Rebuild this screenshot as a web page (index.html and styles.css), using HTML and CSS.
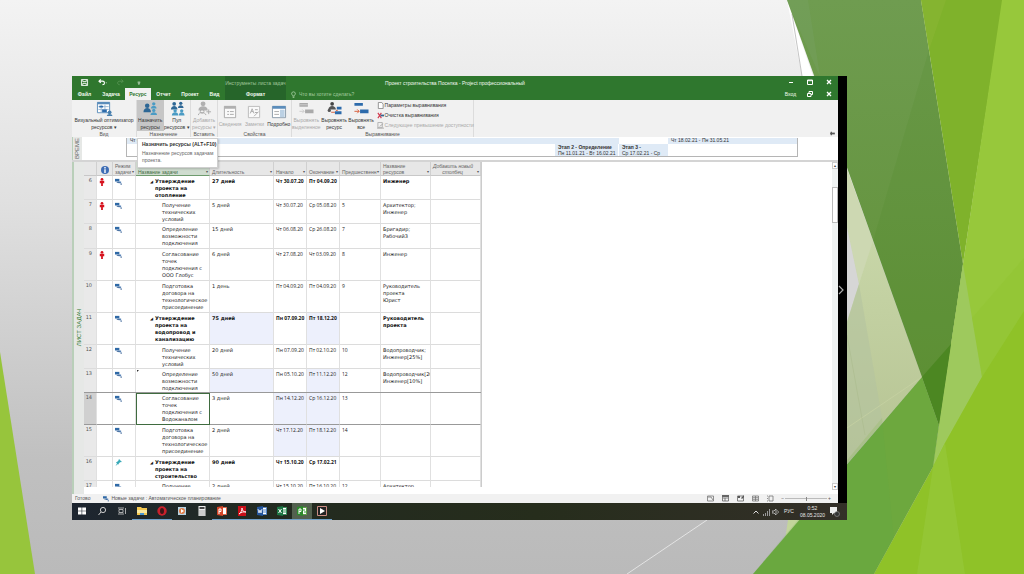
FILE: index.html
```html
<!DOCTYPE html>
<html lang="ru">
<head>
<meta charset="utf-8">
<title>Проект строительства Поселка - Project профессиональный</title>
<link rel="stylesheet" href="styles.css">
</head>
<body>
<svg class="backdrop" viewBox="0 0 1024 574" preserveAspectRatio="none" aria-hidden="true">
  <defs>
    <linearGradient id="slide" x1="0" y1="0" x2="0" y2="1"><stop offset="0" stop-color="#f3f3f3"/><stop offset=".35" stop-color="#e0e0e0"/><stop offset=".8" stop-color="#c0c0c0"/><stop offset="1" stop-color="#bababa"/></linearGradient>
    <linearGradient id="forest" x1="0" y1="0" x2="0" y2="1"><stop offset="0" stop-color="#6f9c50"/><stop offset="1" stop-color="#5f9035"/></linearGradient>
    <linearGradient id="pale" x1="0" y1="0" x2="0" y2="1"><stop offset="0" stop-color="#cfdeb0"/><stop offset="1" stop-color="#b5c292"/></linearGradient>
  </defs>
  <path fill="url(#slide)" d="M0 0H1024V574H0z"/>
  <path fill="#fff" d="M787 0 813 76H802z"/>
  <path fill="none" stroke="#b5b5b5" stroke-width=".8" d="M792 14 802 76"/>
  <path fill="#97c53c" d="M0 352 35 574H0z"/>
  <path fill="none" stroke="#eee" stroke-width=".8" d="M707 520 627 574"/>
  <path fill="#c3d59b" d="M788 520H800L785 540z"/>
  <path fill="url(#pale)" d="M840 150 922 377 840 472z"/>
  <path fill="#cdd8b2" d="M847 170 873 241 859 284 847 227z"/>
  <path fill="#d6d6d6" d="M847 227 859 284 847 322z"/>
  <path fill="#b4c3a0" opacity=".6" d="M859 284 882 418 847 460V322z"/>
  <path fill="none" stroke="#c7d2a4" stroke-width=".7" d="M847 428 922 377"/>
  <path fill="none" stroke="#a9b98a" stroke-width=".5" d="M847 335 865 435"/>
  <path fill="url(#forest)" d="M787 0H921L963 264 939 425 922 377z"/>
  <path fill="#7aa36b" opacity=".3" d="M787 0H808L820 76 847 170V140z"/>
  <path fill="#3f7d10" opacity=".1" d="M929 50 963 264 939 425 873 241z"/>
  <path fill="#7fb22b" d="M921 0H1003L963 264z"/>
  <path fill="#8bb635" opacity=".5" d="M921 0H946L929 50z"/>
  <path fill="#97c83b" d="M1002 0H1024V574H917L963 264z"/>
  <path fill="#9ec95d" d="M963 264 982 377 945 443 933 467z"/>
  <path fill="#8fc22f" opacity=".35" d="M1024 258 972 318 982 377 1024 311z"/>
  <path fill="#6da83e" d="M922 377 753 574H874L933 467 939 425z"/>
  <path fill="#5fa548" opacity=".15" d="M882 418 753 574H890L894 540z"/>
  <path fill="#4c8722" d="M922 377 951 344 939 425z"/>
  <path fill="#8fc228" d="M1024 311 982 377 945 443 933 467 874 574H1024z"/>
  <path fill="#97c83b" opacity=".65" d="M945 443 933 467 917 574H965z"/>
</svg>

<svg width="0" height="0" class="sprite" aria-hidden="true">
  <symbol id="auto" viewBox="0 0 8 8"><path fill="#2f69a6" d="M0 1h5v3H0z"/><path fill="#5b86b8" d="M4 4h3v2H4z"/><path fill="none" stroke="#2f5a90" d="M2 5h3M7 6v2"/></symbol>
  <symbol id="person" viewBox="0 0 6 9"><circle cx="3" cy="1.500" r="1.500" fill="#d6131f"/><path fill="#d6131f" d="M.5 3h5v3H4v3H2V6H.5z"/></symbol>
  <symbol id="pin" viewBox="0 0 7 7"><path fill="#38a9b8" d="M4 0l3 3-2 .3L3.500 5 4 6 3 5 .5 7 2 4.500 1 3.500 3.200 2z"/></symbol>
  <symbol id="people" viewBox="0 0 20 16"><g fill="#2d6795"><circle cx="7" cy="5" r="2.400"/><path d="M3 12c0-6 8-6 8 0z"/></g><g fill="#4a9bc4"><circle cx="14" cy="3" r="1.800"/><path d="M11 8c0-4 6-4 6 0z"/><circle cx="14" cy="10" r="1.800"/><path d="M10.500 15c0-4 7-4 7 0z"/></g></symbol>
  <symbol id="pool" viewBox="0 0 20 16"><g fill="#2d6795"><circle cx="7" cy="3" r="2"/><path d="M3.500 9c0-5 7-5 7 0z"/><circle cx="14" cy="2.500" r="1.800"/><path d="M11 7.500c0-4 6-4 6 0z"/></g><g fill="#4a9bc4"><circle cx="8" cy="10.500" r="1.800"/><path d="M4.500 15.500c0-4.500 7-4.500 7 0z"/><circle cx="15" cy="10.500" r="1.800"/><path d="M12 15.500c0-4.500 6-4.500 6 0z"/></g></symbol>
  <symbol id="add" viewBox="0 0 20 16"><g fill="#b0b0b0"><circle cx="9" cy="3" r="2.600"/><path d="M4 10c0-6 10-6 10 0z"/></g><g fill="none" stroke="#aaa"><circle cx="8" cy="11" r="2"/><path d="M4 15c0-4 8-3 8 0M15 9v5M12.500 11.500h5"/></g></symbol>
  <symbol id="planner" viewBox="0 0 20 16"><path fill="#fff" stroke="#5b8dbb" d="M3 1.500h13v11H3z"/><path fill="#5b8dbb" d="M3 1h13v2.500H3z"/><path stroke="#9bb9d4" d="M4 6h11M4 9h11M7 4v8M11 4v8"/><path fill="#2d6bab" d="M5 5h4v2H5zM8 9h5v3H8z"/><circle cx="16" cy="12" r="2" fill="#487fad"/><path fill="#487fad" d="M13 16c0-3 6-3 6 0z"/></symbol>
  <symbol id="info" viewBox="0 0 20 16"><path fill="#fafafa" stroke="#aaa" d="M4 1.500h12v12H4z"/><path fill="#b0b0b0" d="M4 1h12v3H4z"/><path stroke="#aaa" d="M7 7h2M10 7h4M7 10h2M10 10h4"/></symbol>
  <symbol id="notes" viewBox="0 0 20 16"><path fill="#fafafa" stroke="#bbb" d="M4 1.500h12v12H4z"/><path fill="none" stroke="#aaa" d="M6 9l2-5 2 5M7 7h2M11 5h3M11 8h3M10 12l5-5"/></symbol>
  <symbol id="details" viewBox="0 0 20 16"><path fill="#fff" stroke="#8899a8" d="M3 1.500h14v12H3z"/><path fill="#5b8dbb" d="M3 1h14v3H3z"/><path fill="#bcd1e4" d="M11 5h5v8h-5z"/><path stroke="#aaa" d="M5 7h5M5 10h5"/></symbol>
  <symbol id="level" viewBox="0 0 20 16"><path fill="#aaa" d="M3 2h9v4H3zM9 9h9v4H9z"/><path stroke="#ccc" fill="none" d="M3 11h5M6 9l2 2-2 2M3 4h9"/></symbol>
  <symbol id="levelres" viewBox="0 0 20 16"><circle cx="8" cy="3" r="2" fill="#444"/><path fill="#555" d="M4 9c0-5 8-5 8 0z"/><circle cx="5" cy="10" r="1.800" fill="#555"/><path fill="#2d6bab" d="M13 6h5v3h-5zM11 11h7v3h-7z"/><path stroke="#d75b37" d="M7 12h4M12 10h2"/></symbol>
  <symbol id="levelall" viewBox="0 0 20 16"><path fill="#2d6bab" d="M3 2h9v3H3zM9 9h9v4H9z"/><path stroke="#d75b37" fill="none" d="M3 11h5M6 9l2 2-2 2"/></symbol>
  <symbol id="gear" viewBox="0 0 8 8"><path fill="#fff" stroke="#888" d="M1.500 .5h4l1.500 2v5H1.500z"/></symbol>
  <symbol id="clear" viewBox="0 0 8 8"><path stroke="#d33c50" stroke-width="1.300" d="M1 1l4 6M5 1L1 7"/><path fill="#35658f" d="M4 3h4v2H4z"/></symbol>
  <symbol id="next" viewBox="0 0 8 8"><path fill="none" stroke="#aaa" d="M1 .5h5v6H1zM0 7h8M3 5l4-3"/></symbol>
</svg>

<main class="window">
  <div class="upper">
    <div class="project">
      <header class="head">
        <div class="quick">
          <button aria-label="Сохранить"><svg viewBox="0 0 8 8"><path fill="none" stroke="#fff" d="M.5 .5h7v7h-7zM2 1v2h4V1M2 7V5h4v2"/></svg></button>
          <button aria-label="Отменить"><svg viewBox="0 0 10 8"><path fill="none" stroke="#fff" stroke-width="1.300" d="M1 2.500h4c3 0 3 4 0 4M3 .5L1 2.500l2 2"/><path fill="#fff" d="M8.500 4h1.500l-.7 1z"/></svg></button>
          <button class="off" aria-label="Вернуть"><svg viewBox="0 0 10 8"><path fill="none" stroke="#5a9656" d="M8 2.500H4c-3 0-3 4 0 4M6 .5l2 2-2 2"/></svg></button>
          <button aria-label="Настройка панели"><svg viewBox="0 0 8 8"><path fill="#fff" d="M3 3h3v1H3zM3 5h3L4.500 6.500z"/></svg></button>
        </div>
        <div class="context">Инструменты листа задач</div>
        <h1>Проект строительства Поселка - Project профессиональный</h1>
        <div class="winbtns">
          <button aria-label="Свернуть"><svg viewBox="0 0 6 6"><path stroke="#fff" d="M1 3.500h4"/></svg></button>
          <button aria-label="Развернуть"><svg viewBox="0 0 6 6"><path fill="none" stroke="#fff" d="M.5 1h5v4.500h-5zM1 1.700h4"/></svg></button>
          <button aria-label="Закрыть"><svg viewBox="0 0 6 6"><path stroke="#fff" stroke-width="1.300" d="M1 1l4 4M5 1L1 5"/></svg></button>
        </div>
        <nav class="tabs"><button>Файл</button><button>Задача</button><button class="on">Ресурс</button><button>Отчет</button><button>Проект</button><button>Вид</button></nav>
        <button class="format">Формат</button>
        <label class="tell"><svg viewBox="0 0 6 8"><path fill="none" stroke="#a9d0a5" d="M2 6V5C0 3.500.5.800 3 .8S6 3.500 4 5v1zM2 7.500h2"/></svg><input placeholder="Что вы хотите сделать?" aria-label="Что вы хотите сделать?"></label>
        <div class="winbtns">
          <button>Вход</button>
          <button aria-label="Восстановить"><svg viewBox="0 0 6 6"><path fill="none" stroke="#fff" d="M.5 2.500h3.500v3H.5zM2 2V.5h3.500v3H4"/></svg></button>
          <button aria-label="Закрыть проект"><svg viewBox="0 0 6 6"><path stroke="#fff" stroke-width="1.300" d="M1 1l4 4M5 1L1 5"/></svg></button>
        </div>
      </header>

      <section class="ribbon" aria-label="Лента">
        <div class="group view"><div class="tools"><button><svg><use href="#planner"/></svg>Визуальный оптимизатор<br>ресурсов ▾</button></div><p>Вид</p></div>
        <div class="group assign"><div class="tools"><button class="pressed"><svg><use href="#people"/></svg>Назначить<br>ресурсы</button><button><svg><use href="#pool"/></svg>Пул<br>ресурсов ▾</button></div><p>Назначение</p></div>
        <div class="group insert"><div class="tools"><button class="off"><svg><use href="#add"/></svg>Добавить<br>ресурсы ▾</button></div><p>Вставить</p></div>
        <div class="group props"><div class="tools"><button class="off"><svg><use href="#info"/></svg>Сведения</button><button class="off"><svg><use href="#notes"/></svg>Заметки</button><button><svg><use href="#details"/></svg>Подробно</button></div><p>Свойства</p></div>
        <div class="group align"><div class="tools"><button class="off"><svg><use href="#level"/></svg>Выровнять<br>выделенное</button><button><svg><use href="#levelres"/></svg>Выровнять<br>ресурс</button><button><svg><use href="#levelall"/></svg>Выровнять<br>все</button>
          <div class="list"><button><svg><use href="#gear"/></svg>Параметры выравнивания</button><button><svg><use href="#clear"/></svg>Очистка выравнивания</button><button class="off"><svg><use href="#next"/></svg>Следующее превышение доступности</button></div></div><p>Выравнивание</p></div>
        <button class="collapse" aria-label="Закрепить ленту"><svg viewBox="0 0 6 6"><path stroke="#555" stroke-width="1.500" d="M1 3h4"/><path stroke="#555" d="M2 1.500v3"/></svg></button>
      </section>

      <section class="timeline">
        <div class="side gray"><span>ВРЕМЕ</span></div>
        <div class="track">
          <div class="bars"><span class="blue first">Чт 0</span><span></span><span class="blue last">Чт 18.02.21 - Пн 31.05.21</span></div>
          <div class="bars low"><span></span><span class="blue"><b>Этап 2 - Определение</b><br>Пн 11.01.21 - Вт 16.02.21</span><span class="blue"><b>Этап 3 -</b><br>Ср 17.02.21 - Ср</span></div>
        </div>
        <div class="tip" role="tooltip"><b>Назначить ресурсы (ALT+F10)</b><p>Назначение ресурсов задачам<br>проекта.</p></div>
      </section>

      <section class="sheet">
        <div class="side"><span>ЛИСТ ЗАДАЧ</span></div>
        <div class="clip">
        <table>
          <colgroup><col class="c-num"><col class="c-info"><col class="c-mode"><col class="c-name"><col class="c-dur"><col class="c-date"><col class="c-date"><col class="c-pred"><col class="c-res"><col class="c-res"></colgroup>
          <thead><tr><th></th><th class="ic"><svg viewBox="0 0 8 8"><circle cx="4" cy="4" r="4" fill="#3e6db5"/><path stroke="#fff" stroke-width="1.400" d="M4 1v1.500M4 3.300V7"/></svg></th><th>Режим<br>задачи<i>▾</i></th><th class="sel">Название задачи<i>▾</i></th><th>Длительность<i>▾</i></th><th>Начало<i>▾</i></th><th>Окончание<i>▾</i></th><th>Предшественн<i>▾</i></th><th>Название<br>ресурсов<i>▾</i></th><th class="mid">Добавить новый<br>столбец<i>▾</i></th></tr></thead>
          <tbody>
            <tr class="sum"><td>6</td><td><svg><use href="#person"/></svg></td><td><svg><use href="#auto"/></svg></td><td>Утверждение<br>проекта на<br>отопление</td><td>27 дней</td><td>Чт 30.07.20</td><td>Пт 04.09.20</td><td></td><td>Инженер</td><td></td></tr>
            <tr><td>7</td><td><svg><use href="#person"/></svg></td><td><svg><use href="#auto"/></svg></td><td>Получение<br>технических<br>условий</td><td>5 дней</td><td>Чт 30.07.20</td><td>Ср 05.08.20</td><td>5</td><td>Архитектор;<br>Инженер</td><td></td></tr>
            <tr><td>8</td><td></td><td><svg><use href="#auto"/></svg></td><td>Определение<br>возможности<br>подключения</td><td>15 дней</td><td>Чт 06.08.20</td><td>Ср 26.08.20</td><td>7</td><td>Бригадир;<br>Рабочий3</td><td></td></tr>
            <tr class="tall"><td>9</td><td><svg><use href="#person"/></svg></td><td><svg><use href="#auto"/></svg></td><td>Согласование<br>точек<br>подключения с<br>ООО Глобус</td><td>6 дней</td><td>Чт 27.08.20</td><td>Чт 03.09.20</td><td>8</td><td>Инженер</td><td></td></tr>
            <tr class="tall"><td>10</td><td></td><td><svg><use href="#auto"/></svg></td><td>Подготовка<br>договора на<br>технологическое<br>присоединение</td><td>1 день</td><td>Пт 04.09.20</td><td>Пт 04.09.20</td><td>9</td><td>Руководитель<br>проекта<br>Юрист</td><td></td></tr>
            <tr class="tall sum"><td>11</td><td></td><td><svg><use href="#auto"/></svg></td><td>Утверждение<br>проекта на<br>водопровод и<br>канализацию</td><td class="chg">75 дней</td><td>Пн 07.09.20</td><td class="chg">Пт 18.12.20</td><td></td><td>Руководитель<br>проекта</td><td></td></tr>
            <tr><td>12</td><td></td><td><svg><use href="#auto"/></svg></td><td>Получение<br>технических<br>условий</td><td>20 дней</td><td>Пн 07.09.20</td><td>Пт 02.10.20</td><td>10</td><td>Водопроводчик;<br>Инженер[25%]</td><td></td></tr>
            <tr><td>13</td><td></td><td><svg><use href="#auto"/></svg></td><td class="mark">Определение<br>возможности<br>подключения</td><td class="chg">50 дней</td><td>Пн 05.10.20</td><td class="chg">Пт 11.12.20</td><td>12</td><td>Водопроводчик[20<br>Инженер[10%]</td><td></td></tr>
            <tr class="tall current"><td>14</td><td></td><td><svg><use href="#auto"/></svg></td><td>Согласование<br>точек<br>подключения с<br>Водоканалом</td><td>3 дней</td><td class="chg">Пн 14.12.20</td><td class="chg">Ср 16.12.20</td><td>13</td><td></td><td></td></tr>
            <tr class="tall"><td>15</td><td></td><td><svg><use href="#auto"/></svg></td><td>Подготовка<br>договора на<br>технологическое<br>присоединение</td><td>2 дней</td><td class="chg">Чт 17.12.20</td><td class="chg">Пт 18.12.20</td><td>14</td><td></td><td></td></tr>
            <tr class="sum"><td>16</td><td></td><td><svg><use href="#pin"/></svg></td><td>Утверждение<br>проекта на<br>строительство</td><td>90 дней</td><td>Чт 15.10.20</td><td>Ср 17.02.21</td><td></td><td></td><td></td></tr>
            <tr><td>17</td><td></td><td><svg><use href="#auto"/></svg></td><td>Получение</td><td>2 дней</td><td>Чт 15.10.20</td><td>Пт 16.10.20</td><td>12</td><td>Архитектор</td><td></td></tr>
          </tbody>
        </table>
        </div>
        <div class="scroll"><button aria-label="Вверх">▴</button><span class="thumb"></span><button aria-label="Вниз">▾</button></div>
      </section>

      <footer class="status">
        <span>Готово</span><span class="newtask"><svg><use href="#auto"/></svg>Новые задачи : Автоматическое планирование</span>
        <div class="views">
          <button aria-label="Диаграмма"><svg viewBox="0 0 7 7"><path fill="none" stroke="#777" stroke-width=".8" d="M.5 1h6v5h-6zM1 2h3l2 3"/></svg></button>
          <button aria-label="Таблица"><svg viewBox="0 0 7 7"><path fill="none" stroke="#666" stroke-width=".8" d="M.5 1h6v5h-6zM1 3h5M3 3v3"/><path fill="#666" d="M0 0h7v2H0z"/></svg></button>
          <button aria-label="Планировщик"><svg viewBox="0 0 7 7"><path fill="none" stroke="#666" stroke-width=".8" d="M.5 1h6v5h-6z"/><path fill="#555" d="M1 1h2v2H1zM4 3l3-3v2L5 4z"/></svg></button>
          <button aria-label="Лист"><svg viewBox="0 0 7 7"><path fill="none" stroke="#777" stroke-width=".8" d="M.5 1h6v5h-6zM1 2.700h5M1 4.300h5M3.500 1v5"/></svg></button>
          <button aria-label="Отчет"><svg viewBox="0 0 7 7"><path fill="none" stroke="#777" stroke-width=".8" d="M2 1h4v5H2zM0 1h1M0 6h1M0 3.500h1"/></svg></button>
        </div>
        <div class="zoom"><span>−</span><input type="range" aria-label="Масштаб"><span>+</span></div>
      </footer>
    </div>
    <div class="edge"><svg viewBox="0 0 9 12"><path fill="none" stroke="#aaa" stroke-width="1.200" d="M1 2l4 4-4 4"/></svg></div>
  </div>

  <footer class="taskbar">
    <div class="apps">
      <button class="plain" aria-label="Пуск"><svg viewBox="0 0 10 10"><path fill="#fff" d="M1 1.500h3.600v3.200H1zM5.200 1.500H9v3.200H5.200zM1 5.300h3.600v3.200H1zM5.200 5.300H9v3.200H5.200z"/></svg></button>
      <button class="plain" aria-label="Поиск"><svg viewBox="0 0 10 10"><circle cx="6" cy="4" r="2.600" fill="none" stroke="#ccc"/><path stroke="#ccc" d="M4 6L1.500 9"/></svg></button>
      <button class="plain" aria-label="Представление задач"><svg viewBox="0 0 10 10"><path fill="none" stroke="#ccc" stroke-width=".8" d="M2 3.500h4v3H2zM1 2h6M1 8h6M8.500 2v6"/></svg></button>
      <button aria-label="Проводник"><svg viewBox="0 0 10 10"><path fill="#f3c74f" d="M0 1h4l1 1h5v7H0z"/><path fill="#fbe9a0" d="M0 4h10v3H0z"/><path fill="#4a95cf" d="M3 7h4v2H3z"/></svg></button>
      <button aria-label="Opera"><svg viewBox="0 0 10 10"><circle cx="5" cy="5" r="4.700" fill="#c9202b"/><ellipse cx="5" cy="5" rx="2" ry="3" fill="#3e1518"/></svg></button>
      <button class="plain" aria-label="Медиа"><svg viewBox="0 0 10 10"><path fill="#b8d2e2" d="M1 1h8v8H1z"/><circle cx="5" cy="5" r="3" fill="#e17b45"/><path fill="#fff" d="M4 3l3 2-3 2z"/></svg></button>
      <button class="plain" aria-label="Калькулятор"><svg viewBox="0 0 10 10"><path fill="#eee" d="M1.500 0h7v10h-7z"/><path fill="#444" d="M2.500 1h5v2h-5z"/><path stroke="#666" stroke-dasharray="1 1" d="M2.500 5h5M2.500 7h5M2.500 9h5"/></svg></button>
      <button aria-label="PowerPoint"><svg viewBox="0 0 10 10"><path fill="#fff" stroke="#df6547" d="M4 1.500h5.500v7H4z"/><path fill="#d34527" d="M0 1l6-1v10L0 9z"/><path fill="none" stroke="#fff" d="M2 8V3h2v2.500H2"/></svg></button>
      <button aria-label="Acrobat"><svg viewBox="0 0 10 10"><path fill="#c90f18" d="M1 0h8v10H1z"/><path fill="none" stroke="#fff" stroke-width=".9" d="M2 8c2-1 3-4 3-6 0 3 2 4 4 4-2-.5-5 0-7 2z"/></svg></button>
      <button aria-label="Word"><svg viewBox="0 0 10 10"><path fill="#fff" stroke="#5686c5" d="M4 1.500h5.500v7H4zM6 4h3M6 6h3"/><path fill="#24559a" d="M0 1l6-1v10L0 9z"/><path fill="none" stroke="#fff" stroke-width=".8" d="M1 3l1 4 1-3 1 3 1-4"/></svg></button>
      <button aria-label="Excel"><svg viewBox="0 0 10 10"><path fill="#fff" stroke="#36925b" d="M4 1.500h5.500v7H4zM6 4h3M6 6h3"/><path fill="#1c7443" d="M0 1l6-1v10L0 9z"/><path stroke="#fff" d="M1.500 3l3 4M4.500 3l-3 4"/></svg></button>
      <button class="active" aria-label="Project"><svg viewBox="0 0 10 10"><path fill="#fff" stroke="#5ca646" d="M4 1.500h5.500v7H4z"/><path fill="#2d8a2d" d="M0 1l6-1v10L0 9z"/><path fill="none" stroke="#fff" d="M2 8V3h2v2.500H2"/><path stroke="#3d9c3d" d="M6 4h2M7 6h2"/></svg></button>
      <button aria-label="Видео"><svg viewBox="0 0 10 10"><path fill="#222" stroke="#c98c83" d="M.5 .5h9v9h-9z"/><path fill="#fff" d="M3 2l5 3-5 3z"/></svg></button>
    </div>
    <div class="tray">
      <svg viewBox="0 0 8 8"><path fill="none" stroke="#ddd" d="M1.500 5.500L4 3l2.500 2.500"/></svg>
      <svg viewBox="0 0 8 8"><path fill="#999" d="M1 6h1v2H1zM3 5h1v3H3zM5 3h1v5H5zM7 1h1v7H7z"/></svg>
      <svg viewBox="0 0 8 8"><path fill="none" stroke="#ccc" stroke-width=".8" d="M0 3h2l2-2v6L2 5H0zM5.500 2.500c1 1 1 2 0 3"/></svg>
      <span>РУС</span><time>0:52<br>08.05.2020</time>
      <svg class="note" viewBox="0 0 11 11"><path fill="#eee" d="M1 1h7v6H5L3 9V7H1z"/><circle cx="8" cy="8" r="2.500" fill="#333" stroke="#999" stroke-width=".6"/></svg>
    </div>
  </footer>
</main>
</body>
</html>
```
FILE: styles.css
```css
* { box-sizing: border-box; }
html, body { height: 100%; }
body {
  position: relative;
  margin: 0;
  padding: 76px 177px 54px 72px;
  overflow: hidden;
  font: 5px/7px "Liberation Sans", sans-serif;
  color: #333;
}
button, input { font: inherit; color: inherit; border: 0; margin: 0; padding: 0; background: none; }
button { white-space: nowrap; }
p { margin: 0; }
svg { display: block; flex: none; }
.sprite { position: absolute; }
.backdrop { position: absolute; inset: 0; width: 100%; height: 100%; z-index: -1; }

.window { display: flex; flex-direction: column; height: 100%; }
.upper { display: flex; flex: 1; min-height: 0; }
.project { display: flex; flex: 1; flex-direction: column; min-width: 0; background: #fff; }
.edge { display: flex; align-items: center; width: 9px; background: #000; }
.edge svg { width: 9px; height: 12px; }

/* title bar and tabs */
.head { display: grid; grid-template-columns: 153px 61px 1fr auto; grid-template-rows: 12px 12px; background: #2f772e; color: #f2faf1; }
.head > * { grid-row: 1; }
.quick { grid-column: 1; display: flex; align-items: center; gap: 9px; padding-left: 8px; }
.quick svg { width: 9px; height: 7px; }
.context { grid-column: 2; background: #26652a; color: #a0c89b; line-height: 14px; text-align: center; white-space: nowrap; }
.head h1 { grid-column: 1 / -1; justify-self: center; margin: 0; font-size: 5px; font-weight: normal; line-height: 14px; }
.winbtns { grid-column: 4; display: grid; grid-template-columns: repeat(3, 19px); place-items: center; }
.winbtns svg { width: 6px; height: 6px; }
.head > .tabs, .head > .format, .head > .tell, .head > .tell ~ .winbtns { grid-row: 2; }
.tabs { grid-column: 1; display: grid; grid-template-columns: 25px 28px 26px 25px 28px 21px; font-weight: bold; }
.tabs .on { background: #f1f1f1; color: #2f772e; }
.format { grid-column: 2; background: #26652a; font-weight: bold; }
.tell { grid-column: 3; display: flex; align-items: center; gap: 3px; padding-left: 5px; }
.tell svg { width: 5px; height: 7px; }
.tell input { flex: 1; min-width: 0; }
.tell input::placeholder { color: #a3cb9e; opacity: 1; }

/* ribbon */
.ribbon { display: flex; height: 37px; background: #f1f1f1; }
.group { display: flex; flex-direction: column; border-right: 1px solid #dcdcdc; }
.group p { text-align: center; color: #555; line-height: 7px; padding-bottom: 1px; }
.tools { display: flex; flex: 1; }
.tools > button { display: block; flex: 1; align-self: flex-start; height: 31px; line-height: 7px; text-align: center; }
.tools > button svg { width: 20px; height: 15px; margin: 1px auto; }
.pressed { background: #c6c6c6; }
.ribbon .off { color: #a9a9a9; }
.view { width: 65px; }
.assign { width: 54px; }
.insert { width: 27px; }
.props { width: 74px; }
.align { width: 182px; }
.align .tools > button { flex: 0 0 27px; }
.list { display: flex; flex-direction: column; gap: 2px; padding: 1px 0 0 2px; }
.list button { display: flex; align-items: center; gap: 1px; height: 8px; }
.list svg { width: 7px; height: 7px; }
.collapse { align-self: flex-end; margin: 0 2px 0 auto; }
.collapse svg { width: 7px; height: 7px; }

/* timeline */
.side { display: flex; align-items: center; justify-content: center; flex: none; width: 12px; background: #e6e8e6; border-left: 2px solid #b9cfb9; color: #2f772e; font-size: 6px; }
.side span { writing-mode: vertical-rl; transform: rotate(180deg); white-space: nowrap; }
.side.gray { color: #666; width: 10px; border-left-width: 1px; }
.timeline { position: relative; display: flex; height: 25px; border-bottom: 2px solid #d4d4d4; }
.track { flex: 1; margin: 1px 40px 3px 44px; border: 1px solid #b5b5b5; border-top: 0; white-space: nowrap; }
.bars { display: grid; grid-template-columns: 1fr 49px 129px; height: 6px; line-height: 5px; }
.bars span { padding-left: 3px; }
.bars .blue { background: #dfeaf6; }
.bars.low { grid-template-columns: 1fr 63px 49px 128px; height: 12px; line-height: 6px; column-gap: 1px; }
.tip { position: absolute; left: 65px; top: 1px; z-index: 2; width: 81px; padding: 2px 5px 3px 4px; border: 1px solid #cfcfcf; background: #fff; box-shadow: 1px 1px 2px #0003; white-space: nowrap; color: #666; }
.tip b { display: block; margin-bottom: 2px; color: #333; }

/* task sheet */
.sheet { display: flex; flex: 1; min-height: 0; }
.clip { flex: 1; min-width: 0; overflow: hidden; margin-bottom: 7px; }
table { width: 397px; table-layout: fixed; border-collapse: separate; border-spacing: 0; border-right: 1px solid #ccc; font: 5px/7px "DejaVu Sans", sans-serif; color: #222; }
.c-num { width: 13px; }
.c-info { width: 16px; }
.c-mode { width: 23px; }
.c-name { width: 74px; }
.c-dur { width: 64px; }
.c-date { width: 33px; }
.c-pred { width: 41px; }
.c-res { width: 50px; }
th { position: relative; height: 14px; padding: 0 2px; vertical-align: bottom; text-align: left; font: 5px/6px "Liberation Sans", sans-serif; color: #666; background: #e7e7e7; border-right: 1px solid #d0d0d0; border-bottom: 1px solid #c8c8c8; white-space: nowrap; }
th i { position: absolute; right: 1px; bottom: 0; font: 4px/6px "DejaVu Sans", sans-serif; color: #555; }
th.sel { background: #cfdccf; color: #3f6b3f; border-bottom-color: #6f9c6f; }
th.mid { padding-right: 8px; text-align: center; font-style: italic; }
th.ic svg { width: 8px; height: 8px; margin: 0 auto 1px; }
td { height: 24px; padding: 2px 0 0 2px; vertical-align: top; border-right: 1px solid #e0e0e0; border-bottom: 1px solid #dcdcdc; white-space: nowrap; overflow: hidden; }
td:nth-child(n+6):nth-child(-n+8) { font-family: "Open Sans", sans-serif; }
.tall td { height: 32px; }
tr:nth-child(3) td { height: 25px; }
tbody tr:last-child td { height: 32px; }
td:first-child { padding: 1px 4px 0 0; text-align: right; background: #e9e9e9; color: #555; }
td:nth-child(2) svg { width: 6px; height: 8px; margin-left: 0; }
td:nth-child(3) svg { width: 7px; height: 7px; }
td:nth-child(4) { position: relative; padding-left: 26px; }
.sum td { font-weight: bold; color: #111; }
.sum td:first-child { font-weight: normal; color: #555; }
.sum td:nth-child(4) { padding-left: 19px; }
.sum td:nth-child(4)::before { content: "◢"; position: absolute; left: 14px; top: 2px; font-size: 4px; }
.chg { background: #edf0fc; }
.mark::after { content: ""; position: absolute; left: 1px; top: 1px; border: 1px solid #333; border-right-color: transparent; border-bottom-color: transparent; }
.current td { border-bottom-color: #999; box-shadow: 0 -1px #999; }
.current td:first-child { background: #d0d0d0; }
.current td:nth-child(4) { border: 1px solid #3f6b3f; padding: 1px 0 0 25px; }
.scroll { display: flex; flex-direction: column; width: 6px; margin-bottom: 4px; background: #f0f3f3; }
.scroll button { height: 7px; border: 1px solid #ccc; background: #fff; font: 4px/5px "DejaVu Sans", sans-serif; }
.thumb { height: 36px; margin: 18px 0 auto; border: 1px solid #bbb; background: #fff; }

/* status bar */
.status { display: flex; align-items: center; height: 9px; padding-left: 3px; background: #f1f1f1; color: #555; white-space: nowrap; }
.newtask { display: flex; gap: 2px; margin-left: 13px; }
.newtask svg { width: 6px; height: 7px; }
.views { display: flex; gap: 8px; margin-left: auto; }
.views svg { width: 7px; height: 7px; }
.zoom { display: flex; align-items: center; gap: 1px; margin: 0 7px; }
.zoom input { appearance: none; width: 42px; height: 1px; background: #bbb; }
.zoom input::-webkit-slider-thumb { appearance: none; width: 1px; height: 4px; background: #888; }

/* taskbar */
.taskbar { display: flex; justify-content: space-between; height: 17px; background: linear-gradient(90deg, #1d2530, #222a20 25%, #262d1c 60%, #332f28); color: #e6e6e6; }
.apps { display: flex; }
.apps button { display: grid; place-items: center; width: 20px; border-bottom: 1px solid #6f9fc8; background-clip: padding-box; }
.apps .plain { border-bottom-color: transparent; }
.apps .active { background: #53614f; }
.apps svg { width: 10px; height: 10px; }
.tray { display: flex; align-items: center; gap: 2px; padding-right: 7px; text-align: center; }
.tray svg { width: 8px; height: 8px; }
.tray span, .tray time { margin: 0 2px; }
.tray .note { width: 11px; height: 11px; }
```
